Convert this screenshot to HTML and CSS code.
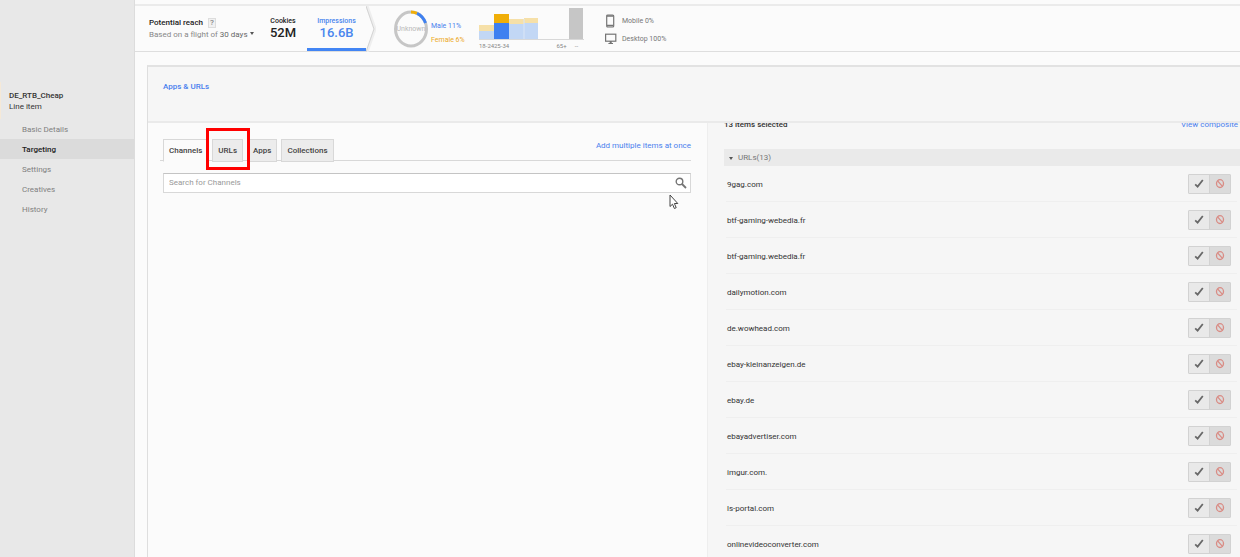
FILE: index.html
```html
<!DOCTYPE html>
<html lang="en">
<head>
    <meta charset="UTF-8">
    <meta name="viewport" content="width=device-width, initial-scale=1.0">
    <title>DE_RTB_Cheap - Targeting</title>
    <link rel="stylesheet" href="styles.css">
</head>
<body>
    <aside class="sidebar">
        <div class="line-item">
            <strong>DE_RTB_Cheap</strong>
            <span>Line item</span>
        </div>
        <nav class="side-nav">
            <a href="#">Basic Details</a>
            <a href="#" class="active">Targeting</a>
            <a href="#">Settings</a>
            <a href="#">Creatives</a>
            <a href="#">History</a>
        </nav>
    </aside>

    <main class="main">
        <section class="reach-bar">
            <div class="reach">
                <div class="reach-title">Potential reach <button class="help">?</button></div>
                <div class="reach-sub">Based on a flight of <button class="days">30 days <span class="caret"></span></button></div>
            </div>
            <div class="stat">
                <span class="stat-label">Cookies</span>
                <span class="stat-value">52M</span>
            </div>
            <div class="stat stat-active">
                <span class="stat-label">Impressions</span>
                <span class="stat-value">16.6B</span>
            </div>
            <svg class="chevron" width="10" height="46" viewBox="0 0 10 46">
                <path d="M1 0 L9 23 L1 46" fill="none" stroke="#eeeeee" stroke-width="3"/>
                <path d="M0 0 L8 23 L0 46" fill="none" stroke="#d4d4d4"/>
            </svg>
            <div class="gender">
                <div class="donut">
                    <svg width="36" height="38" viewBox="0 0 36 38">
                        <ellipse cx="18" cy="19" rx="15.5" ry="17" fill="none" stroke="#c6c6c6" stroke-width="3"/>
                        <path d="M18 2 A15.5 17 0 0 1 24 3.4" fill="none" stroke="#f0ae08" stroke-width="3"/>
                        <path d="M24 3.4 A15.5 17 0 0 1 32.5 13" fill="none" stroke="#3f80f0" stroke-width="3"/>
                    </svg>
                    <span>Unknown</span>
                </div>
                <div class="gender-legend">
                    <span class="male">Male 11%</span>
                    <span class="female">Female 6%</span>
                </div>
            </div>
            <div class="ages">
                <svg width="106" height="32" viewBox="0 0 106 32">
                    <rect x="0" y="17" width="15" height="6" fill="#f6e0a8"/>
                    <rect x="0" y="23" width="15" height="8" fill="#c2d7f5"/>
                    <rect x="15" y="6" width="15" height="9" fill="#f0ae08"/>
                    <rect x="15" y="15" width="15" height="16" fill="#3f80f0"/>
                    <rect x="30" y="11" width="15" height="5" fill="#f6e0a8"/>
                    <rect x="30" y="16" width="15" height="15" fill="#c2d7f5"/>
                    <rect x="45" y="10" width="14" height="5" fill="#f6e0a8"/>
                    <rect x="45" y="15" width="14" height="16" fill="#c2d7f5"/>
                    <path d="M45 11 V31" stroke="#dbe6f6"/>
                    <rect x="90" y="0" width="14" height="31" fill="#c6c6c6"/>
                    <rect x="0" y="31" width="105" height="1" fill="#d8d8d8"/>
                </svg>
                <div class="age-labels">
                    <span>18-24</span><span>25-34</span><span></span><span></span><span></span><span>65+</span><span>--</span>
                </div>
            </div>
            <div class="devices">
                <div class="device">
                    <svg width="12" height="14" viewBox="0 0 12 14">
                        <rect x="1.7" y="1" width="7" height="12" rx="1" fill="none" stroke="#757575" stroke-width="1.2"/>
                        <path d="M2 2 H8.4 M2 11.5 H8.4" stroke="#757575" stroke-width="1.6"/>
                    </svg>
                    <span>Mobile 0%</span>
                </div>
                <div class="device">
                    <svg width="12" height="12" viewBox="0 0 12 12">
                        <rect x="0.6" y="1.2" width="10.2" height="7" fill="none" stroke="#757575" stroke-width="1.2"/>
                        <path d="M4.7 8 H6.7 V10 H8 V11 H3.4 V10 H4.7 Z" fill="#757575"/>
                    </svg>
                    <span>Desktop 100%</span>
                </div>
            </div>
        </section>

        <section class="panel">
            <header class="panel-header">
                <a href="#">Apps &amp; URLs</a>
            </header>
            <div class="panel-body">
                <div class="picker">
                    <div class="tabs">
                        <button class="tab tab-active">Channels</button>
                        <button class="tab tab-urls">URLs<span class="highlight"></span></button>
                        <button class="tab">Apps</button>
                        <button class="tab">Collections</button>
                        <a href="#" class="add-multiple">Add multiple items at once</a>
                    </div>
                    <div class="search">
                        <input type="text" placeholder="Search for Channels" aria-label="Search for Channels">
                        <button class="search-btn" aria-label="Search">
                            <svg width="12" height="12" viewBox="0 0 12 12">
                                <circle cx="4.5" cy="4.5" r="3.3" fill="none" stroke="#757575" stroke-width="1.4"/>
                                <path d="M7 7 L11 11" stroke="#757575" stroke-width="1.8"/>
                            </svg>
                        </button>
                        <svg class="cursor" width="10" height="16" viewBox="0 0 10 16">
                            <path d="M1 1 V12.5 L3.5 10.2 L5.4 14.5 L7.2 13.7 L5.4 9.5 H8.8 Z" fill="#fff" stroke="#444" stroke-width="1"/>
                        </svg>
                    </div>
                </div>

                <div class="selected">
                    <div class="selected-top">
                        <strong>13 items selected</strong>
                        <a href="#">View composite</a>
                    </div>
                    <button class="group"><span class="caret"></span>URLs(13)</button>
                    <ul class="url-list" id="urlList"></ul>
                </div>
            </div>
        </section>
    </main>

    <script>
        const urls = [
            '9gag.com',
            'btf-gaming-webedia.fr',
            'btf-gaming.webedia.fr',
            'dailymotion.com',
            'de.wowhead.com',
            'ebay-kleinanzeigen.de',
            'ebay.de',
            'ebayadvertiser.com',
            'imgur.com.',
            'ls-portal.com',
            'onlinevideoconverter.com'
        ];

        const urlList = document.getElementById('urlList');
        urls.forEach(url => {
            const row = document.createElement('li');
            row.innerHTML = `
                <span class="url">${url}</span>
                <div class="toggle">
                    <button class="include" aria-label="Include ${url}">
                        <svg width="10" height="10" viewBox="0 0 10 10"><path d="M1.2 5.4 L3.6 7.6 L8.8 1" fill="none" stroke="#686868" stroke-width="1.8"/></svg>
                    </button>
                    <button class="exclude" aria-label="Exclude ${url}">
                        <svg width="10" height="10" viewBox="0 0 10 10"><ellipse cx="5" cy="4.6" rx="3.5" ry="3.9" fill="none" stroke="#d98c85" stroke-width="1.3"/><path d="M2.6 1.8 L7.4 7.4" stroke="#d98c85" stroke-width="1.3"/></svg>
                    </button>
                </div>
            `;
            urlList.appendChild(row);
        });
    </script>
</body>
</html>
```

FILE: styles.css
```css
* {
    box-sizing: border-box;
}

body {
    margin: 0;
    height: 100vh;
    overflow: hidden;
    display: flex;
    font-family: Roboto, sans-serif;
    font-size: 8px;
    line-height: 12px;
    color: #333;
    background-color: #fbfbfb;
}

a {
    color: #4a7fee;
    text-decoration: none;
}

button {
    font: inherit;
    color: inherit;
    padding: 0;
    border: none;
    background: none;
    cursor: pointer;
}

svg {
    display: block;
    flex-shrink: 0;
}

strong {
    font-weight: 500;
}

.caret {
    display: inline-block;
    border-left: 2px solid transparent;
    border-right: 2px solid transparent;
    border-top: 3px solid #555;
}

/* sidebar */
.sidebar {
    width: 135px;
    flex-shrink: 0;
    padding-top: 82px;
    background-color: #e8e8e8;
    border-right: 1px solid #dcdcdc;
}

.line-item {
    display: flex;
    flex-direction: column;
    height: 37px;
    padding: 8px 0 0 8px;
    border-left: 1px solid #f5e9d8;
    line-height: 11px;
}

.side-nav a {
    display: block;
    height: 20px;
    padding: 1px 0 0 22px;
    line-height: 20px;
    color: #808080;
}

.side-nav .active {
    color: #222;
    font-weight: 500;
    background-color: #dbdbdb;
}

/* reach bar */
.main {
    flex: 1;
    min-width: 0;
    display: flex;
    flex-direction: column;
    padding-top: 4px;
}

.reach-bar {
    display: flex;
    height: 48px;
    flex-shrink: 0;
    border-top: 2px solid #ebebeb;
    border-bottom: 1px solid #dedede;
}

.reach {
    width: 124px;
    padding: 11px 0 0 14px;
    white-space: nowrap;
}

.reach-title {
    font-weight: 500;
    color: #222;
}

.help {
    width: 8px;
    height: 10px;
    margin-left: 3px;
    line-height: 8px;
    color: #888;
    border: 1px solid #ddd;
    background-color: #f1f1f1;
}

.reach-sub {
    color: #888;
}

.days {
    color: #666;
}

.days .caret {
    margin-bottom: 2px;
}

.stat {
    display: flex;
    flex-direction: column;
    align-items: center;
    width: 48px;
    padding-top: 9px;
    color: #222;
}

.stat-label {
    font-size: 7px;
    font-weight: 500;
}

.stat-value {
    font-size: 13px;
    font-weight: 500;
}

.stat-active {
    width: 59px;
    color: #4a86ee;
    border-bottom: 3px solid #4285f4;
}

.chevron {
    margin-right: 17px;
}

.gender {
    display: flex;
    align-items: center;
    width: 86px;
}

.donut {
    display: grid;
    place-items: center;
}

.donut svg,
.donut span {
    grid-area: 1 / 1;
}

.donut span {
    font-size: 7px;
    color: #b8b8b8;
}

.gender-legend {
    display: flex;
    flex-direction: column;
    gap: 2px;
    margin-left: 2px;
    padding-top: 9px;
    font-size: 7px;
    white-space: nowrap;
}

.male {
    color: #4a7fee;
}

.female {
    color: #eda91c;
}

.ages {
    width: 126px;
    padding-top: 2px;
}

.age-labels {
    display: grid;
    grid-template-columns: repeat(7, 15px);
    padding-top: 2px;
    font-size: 6px;
    line-height: 8px;
    color: #888;
    text-align: center;
    white-space: nowrap;
}

.devices {
    display: flex;
    flex-direction: column;
    gap: 5px;
    padding-top: 8px;
    color: #777;
    font-size: 7px;
}

.device {
    display: flex;
    align-items: center;
    gap: 5px;
}

/* panel */
.panel {
    flex: 1;
    min-height: 0;
    display: flex;
    flex-direction: column;
    margin: 13px 0 0 12px;
    border-top: 2px solid #e2e2e2;
    border-left: 1px solid #dedede;
}

.panel-header {
    height: 56px;
    flex-shrink: 0;
    padding: 14px 15px;
    background-color: #f6f6f6;
    border-bottom: 2px solid #eaeaea;
}

.panel-header a {
    font-weight: 500;
}

.panel-body {
    flex: 1;
    min-height: 0;
    display: grid;
    grid-template-columns: 559fr 533fr;
    overflow: hidden;
}

.picker {
    padding: 16px 16px 0 12px;
}

.tabs {
    display: flex;
    height: 22px;
    gap: 4px;
    padding-left: 3px;
    border-bottom: 1px solid #d8d8d8;
}

.tab {
    height: 23px;
    padding: 0 5px;
    color: #444;
    font-weight: 500;
    background-color: #ececec;
    border: 1px solid #d8d8d8;
}

.tab-active {
    background-color: #fbfbfb;
    border-bottom-color: #fbfbfb;
}

.tab-urls {
    position: relative;
}

.highlight {
    position: absolute;
    top: -12px;
    right: -8px;
    bottom: -9px;
    left: -7px;
    border: 3px solid #f00;
    z-index: 1;
}

.add-multiple {
    margin-left: auto;
    padding-top: 1px;
}

.search {
    position: relative;
    display: flex;
    height: 20px;
    margin: 12px 0 0 3px;
    background-color: #fff;
    border: 1px solid #d8d8d8;
    border-top-color: #c4c4c4;
}

.search input {
    flex: 1;
    min-width: 0;
    padding: 0 5px;
    font: inherit;
    color: #333;
    border: none;
    outline: none;
    background: none;
}

.search input::placeholder {
    color: #999;
}

.search-btn {
    width: 18px;
    padding-left: 3px;
}

.cursor {
    position: absolute;
    top: 20px;
    right: 11px;
}

.selected {
    padding-left: 16px;
    background-color: #f6f6f6;
    border-left: 1px solid #eee;
}

.selected-top {
    display: flex;
    justify-content: space-between;
    margin-top: -4px;
    padding-right: 2px;
}

.group {
    display: flex;
    align-items: center;
    gap: 5px;
    width: 100%;
    height: 17px;
    margin-top: 18px;
    padding: 1px 0 0 5px;
    color: #777;
    background-color: #eaeaea;
}

.url-list {
    list-style: none;
    margin: 0 3px 0 2px;
    padding: 0;
}

.url-list li {
    display: flex;
    align-items: center;
    justify-content: space-between;
    height: 36px;
    padding: 0 6px 0 1px;
    border-bottom: 1px solid #efefef;
}

.url {
    padding-top: 2px;
}

.toggle {
    display: flex;
    height: 20px;
    border: 1px solid #d2d2d2;
    border-radius: 1px;
}

.toggle button {
    display: grid;
    place-items: center;
    width: 20px;
    background-color: #e9e9e9;
}

.toggle .exclude {
    width: 21px;
    background-color: #dbdbdb;
    border-left: 1px solid #d2d2d2;
}
```
